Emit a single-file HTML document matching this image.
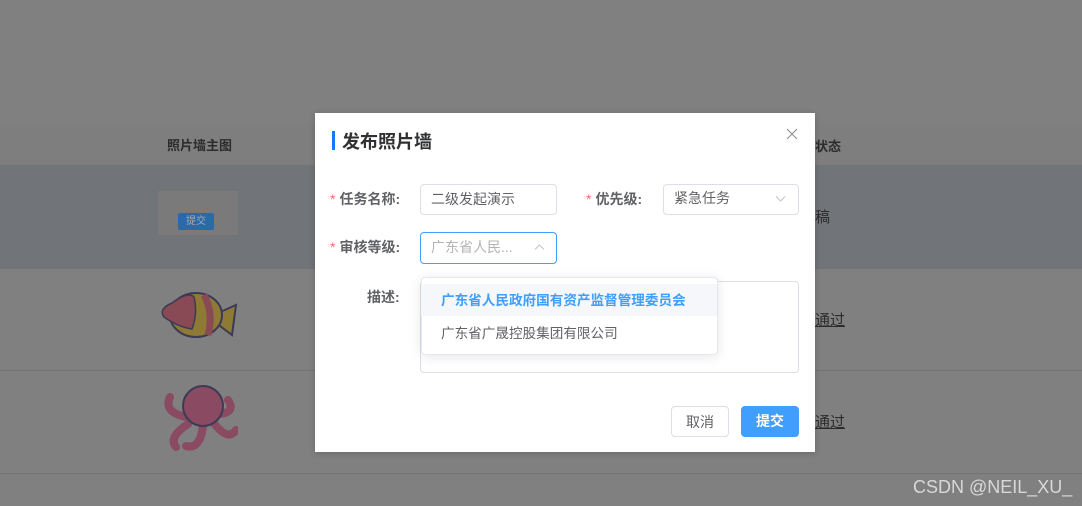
<!DOCTYPE html>
<html><head><meta charset="utf-8"><style>
*{margin:0;padding:0;box-sizing:border-box}
body{width:1082px;height:506px;overflow:hidden;background:#808080;position:relative;font-family:"Liberation Sans","Noto Sans CJK SC",sans-serif;font-size:14px;color:#303133}
.a{position:absolute}
.t{position:absolute;white-space:nowrap}
.line{position:absolute;left:0;width:1082px;height:1px;background:#747478}
.lbl{font-size:14px;font-weight:bold;color:#606266}
.lbl b{color:#f56c6c;font-weight:normal;margin-right:4px}
.box{position:absolute;border:1px solid #dcdfe6;border-radius:4px;background:#fff}
</style></head><body>
<div class="a" style="left:0;top:125px;width:1082px;height:40px;background:#7e7e7e"></div>
<div class="a" style="left:0;top:165px;width:1082px;height:103px;background:#717479"></div>
<div class="line" style="top:165px"></div>
<div class="line" style="top:268px"></div>
<div class="line" style="top:370px"></div>
<div class="line" style="top:473px"></div>
<div class="t" style="left:167px;top:135px;font-size:13px;font-weight:bold;color:#2c2c2c">照片墙主图</div>
<div class="a" style="left:158px;top:191px;width:80px;height:44px;background:#7a7a7a"></div>
<div class="a" style="left:178px;top:213px;width:36px;height:17px;background:#2a6aa8;border-radius:2px;color:#aaa;font-size:10px;text-align:center;line-height:17px">提交</div>
<svg class="a" style="left:158px;top:283px" width="80" height="64" viewBox="0 0 80 64"><path d="M60 30 L78 22 L74 52 L58 40Z" fill="#8e7a34" stroke="#3b3b55" stroke-width="2"/><ellipse cx="38" cy="32" rx="26" ry="22" fill="#8e7a34" stroke="#3b3b55" stroke-width="2"/><path d="M14 20 Q30 8 36 14 Q40 30 34 46 Q20 44 6 34 Q0 26 14 20Z" fill="#8a4a55" stroke="#3b3b55" stroke-width="1.5"/><path d="M46 12 Q56 30 50 52" stroke="#8a4a55" stroke-width="7" fill="none"/></svg>
<svg class="a" style="left:158px;top:382px" width="80" height="70" viewBox="0 0 80 70"><path d="M28 35 Q5 30 12 15 M30 42 Q10 55 18 65 M45 44 Q42 68 28 64 M55 40 Q70 60 78 48 M62 32 Q78 30 70 18" stroke="#8a4a62" stroke-width="8" fill="none" stroke-linecap="round"/><ellipse cx="45" cy="24" rx="20" ry="20" fill="#8a4a62" stroke="#3b3b55" stroke-width="2"/></svg>
<div class="t" style="left:815px;top:136px;font-size:13px;font-weight:bold;color:#2c2c2c">状态</div>
<div class="t" style="left:815px;top:206px;font-size:15px;color:#2c2c2c">稿</div>
<div class="t" style="left:815px;top:309px;font-size:15px;color:#2c2c2c;text-decoration:underline">通过</div>
<div class="t" style="left:815px;top:411px;font-size:15px;color:#2c2c2c;text-decoration:underline">通过</div>
<div class="t" style="left:913px;top:477px;font-size:18px;color:#d8d8d8">CSDN @NEIL_XU_</div>

<div class="a" style="left:315px;top:113px;width:500px;height:339px;background:#fff;box-shadow:0 1px 6px rgba(0,0,0,.2)"></div>
<div class="a" style="left:332px;top:131px;width:3px;height:19px;background:#1677ff"></div>
<div class="t" style="left:342px;top:128px;font-size:18px;font-weight:bold;color:#303133">发布照片墙</div>
<svg class="a" style="left:786px;top:128px" width="12" height="12"><path d="M1 1L11 11M11 1L1 11" stroke="#909399" stroke-width="1.2"/></svg>

<div class="t lbl" style="left:330px;top:189px"><b>*</b>任务名称:</div>
<div class="box" style="left:420px;top:184px;width:137px;height:31px"></div>
<div class="t" style="left:431px;top:189px;color:#606266">二级发起演示</div>
<div class="t lbl" style="left:586px;top:189px"><b>*</b>优先级:</div>
<div class="box" style="left:663px;top:184px;width:136px;height:31px"></div>
<div class="t" style="left:674px;top:188px;color:#606266">紧急任务</div>
<svg class="a" style="left:775px;top:195px" width="11" height="8"><path d="M1 1.5L5.5 6L10 1.5" stroke="#c0c4cc" fill="none"/></svg>

<div class="t lbl" style="left:330px;top:237px"><b>*</b>审核等级:</div>
<div class="box" style="left:420px;top:232px;width:137px;height:32px;border-color:#409eff"></div>
<div class="t" style="left:431px;top:237px;color:#b4b4b4">广东省人民...</div>
<svg class="a" style="left:534px;top:243px" width="11" height="8"><path d="M1 6.5L5.5 2L10 6.5" stroke="#c0c4cc" fill="none"/></svg>

<div class="t lbl" style="left:367px;top:287px">描述:</div>
<div class="box" style="left:420px;top:281px;width:379px;height:92px"></div>
<div class="a" style="left:421px;top:277px;width:297px;height:78px;background:#fff;border:1px solid #e4e7ed;border-radius:4px;box-shadow:0 2px 12px rgba(0,0,0,.1)"></div>
<div class="a" style="left:421px;top:284px;width:296px;height:32px;background:#f5f7fa"></div>
<div class="t" style="left:441px;top:289px;color:#409eff;font-weight:bold;font-size:13.6px">广东省人民政府国有资产监督管理委员会</div>
<div class="t" style="left:441px;top:322px;color:#606266;font-size:13.6px">广东省广晟控股集团有限公司</div>

<div class="box" style="left:671px;top:406px;width:58px;height:31px"></div>
<div class="t" style="left:686px;top:412px;color:#606266">取消</div>
<div class="a" style="left:741px;top:406px;width:58px;height:31px;background:#409eff;border-radius:4px;color:#fff;text-align:center;line-height:30px;font-weight:bold">提交</div>
</body></html>
